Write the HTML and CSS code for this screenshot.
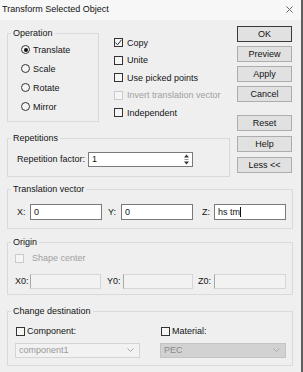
FILE: index.html
```html
<!DOCTYPE html>
<html lang="en">
<head>
    <meta charset="UTF-8">
    <meta name="viewport" content="width=device-width, initial-scale=1.0">
    <title>Transform Selected Object</title>
    <link rel="stylesheet" href="styles.css">
</head>
<body>
    <div class="window">
        <div class="titlebar">
            <span class="title">Transform Selected Object</span>
            <svg class="close" width="7" height="7" viewBox="0 0 7 7"><path d="M0.5 0.5L6.5 6.5M6.5 0.5L0.5 6.5" stroke="#666" stroke-width="1" fill="none"/></svg>
        </div>

        <div class="content">
            <div class="top">
                <div class="left">
                    <div class="row">
                        <div class="group op">
                            <span class="caption">Operation</span>
                            <div class="radio"><span class="dot on"></span>Translate</div>
                            <div class="radio"><span class="dot"></span>Scale</div>
                            <div class="radio"><span class="dot"></span>Rotate</div>
                            <div class="radio"><span class="dot"></span>Mirror</div>
                        </div>
                        <div class="options">
                            <div class="opt">
                                <span class="box">
                                    <svg width="7" height="7" viewBox="0 0 7 7"><path d="M0.5 3.5L2.5 5.8L6.5 0.8" stroke="#333" stroke-width="1" fill="none"/></svg>
                                </span>Copy
                            </div>
                            <div class="opt"><span class="box"></span>Unite</div>
                            <div class="opt"><span class="box"></span>Use picked points</div>
                            <div class="opt disabled"><span class="box"></span>Invert translation vector</div>
                            <div class="opt"><span class="box"></span>Independent</div>
                        </div>
                    </div>

                    <div class="group rep">
                        <span class="caption">Repetitions</span>
                        <div class="rep-row">
                            <span class="rep-label">Repetition factor:</span>
                            <div class="spin">
                                <span class="spin-val">1</span>
                                <svg class="spin-btn" width="9" height="13" viewBox="0 0 9 13">
                                    <path d="M4.5 1.5L7 4.5H2z" fill="#333"/>
                                    <path d="M2.5 6.5H6.5" stroke="#999" stroke-width="1"/>
                                    <path d="M4.5 11.5L7 8.5H2z" fill="#333"/>
                                </svg>
                            </div>
                        </div>
                    </div>
                </div>

                <div class="buttons">
                    <div class="btn-group">
                        <button class="default">OK</button>
                        <button>Preview</button>
                        <button>Apply</button>
                        <button>Cancel</button>
                    </div>
                    <div class="btn-group second">
                        <button>Reset</button>
                        <button>Help</button>
                        <button>Less &lt;&lt;</button>
                    </div>
                </div>
            </div>

            <div class="group vec">
                <span class="caption">Translation vector</span>
                <div class="xyz">
                    <span class="lbl lx">X:</span>
                    <div class="field w72">0</div>
                    <span class="lbl ly">Y:</span>
                    <div class="field w72">0</div>
                    <span class="lbl lz">Z:</span>
                    <div class="field w72">hs tm<span class="caret"></span></div>
                </div>
            </div>

            <div class="group origin">
                <span class="caption">Origin</span>
                <div class="opt disabled shape"><span class="box"></span>Shape center</div>
                <div class="xyz off">
                    <span class="lbl l0x">X0:</span>
                    <div class="field dis w71"></div>
                    <span class="lbl l0y">Y0:</span>
                    <div class="field dis w70"></div>
                    <span class="lbl l0z">Z0:</span>
                    <div class="field dis w72"></div>
                </div>
            </div>

            <div class="group dest">
                <span class="caption">Change destination</span>
                <div class="dest-col comp">
                    <div class="opt"><span class="box"></span>Component:</div>
                    <div class="combo light">
                        <span>component1</span>
                        <svg width="7" height="4" viewBox="0 0 7 4"><path d="M0.5 0.5L3.5 3.5L6.5 0.5" stroke="#aaa" fill="none"/></svg>
                    </div>
                </div>
                <div class="dest-col mat">
                    <div class="opt"><span class="box"></span>Material:</div>
                    <div class="combo dark">
                        <span>PEC</span>
                        <svg width="7" height="4" viewBox="0 0 7 4"><path d="M0.5 0.5L3.5 3.5L6.5 0.5" stroke="#aaa" fill="none"/></svg>
                    </div>
                </div>
            </div>
        </div>
    </div>
</body>
</html>
```

FILE: styles.css
```css
* {
    box-sizing: border-box;
}

body {
    margin: 0;
    background: #f0f0f0;
    font-family: "Liberation Sans", Arial, sans-serif;
    font-size: 9px;
    color: #141414;
}

.window {
    width: 303px;
    height: 372px;
    border-right: 2px solid #5e5e5e;
    background: #efefef;
    overflow: hidden;
}

.titlebar {
    height: 20px;
    display: flex;
    align-items: center;
    justify-content: space-between;
    padding: 0 8px 2px 2px;
    background: #f7f7f7;
}

.title {
    font-size: 9px;
    color: #111;
}

.content {
    padding: 0 8px 0 7px;
}

.top {
    display: flex;
}

.left {
    width: 223px;
}

.row {
    display: flex;
}

/* group boxes: caption sits over the top border */
.group {
    position: relative;
    border: 1px solid #dadada;
}

.caption {
    position: absolute;
    top: -6px;
    left: 3px;
    padding: 0 2px;
    line-height: 11px;
    background: #efefef;
}

.op {
    width: 92px;
    margin-top: 13px;
    padding: 6px 0 3px 13px;
}

.radio {
    height: 19px;
    display: flex;
    align-items: center;
}

.dot {
    width: 9px;
    height: 9px;
    margin-right: 3px;
    border: 1px solid #333;
    border-radius: 50%;
    background: #f5f5f5;
    display: flex;
    align-items: center;
    justify-content: center;
}

.dot.on::after {
    content: "";
    width: 4px;
    height: 4px;
    border-radius: 50%;
    background: #111;
}

.options {
    margin: 14px 0 0 15px;
}

.opt {
    height: 17.5px;
    display: flex;
    align-items: center;
}

.box {
    width: 9px;
    height: 9px;
    margin-right: 4px;
    border: 1px solid #333;
    background: #f5f5f5;
    display: flex;
    align-items: center;
    justify-content: center;
}

.opt.disabled {
    color: #a0a0a0;
}

.opt.disabled .box {
    border-color: #cacaca;
}

.rep {
    width: 223px;
    margin-top: 16px;
    padding: 13px 0 9px 9px;
}

.rep-row {
    display: flex;
    align-items: center;
}

.rep-label {
    width: 71px;
}

.spin {
    width: 105px;
    height: 15px;
    border: 1px solid #7a7a7a;
    background: #fff;
    display: flex;
    align-items: center;
    justify-content: space-between;
    padding: 0 1px 0 3px;
}

/* buttons */
.buttons {
    width: 55px;
    margin-left: 7px;
    padding-top: 6px;
}

.btn-group {
    display: flex;
    flex-direction: column;
    gap: 4px;
}

.btn-group.second {
    margin-top: 13px;
    gap: 5px;
}

button {
    height: 16px;
    padding: 0;
    border: 1px solid #adadad;
    background: #e1e1e1;
    font-family: "Liberation Sans", Arial, sans-serif;
    font-size: 9px;
    color: #141414;
}

button.default {
    border-color: #3a3a3a;
}

/* coordinate rows */
.vec {
    margin-top: 12px;
    padding: 14px 0 8px 9px;
}

.xyz {
    display: flex;
    align-items: center;
}

.lbl {
    flex: none;
}

.lx { width: 13px; }
.ly { width: 13px; margin-left: 6px; }
.lz { width: 12px; margin-left: 9px; }

.field {
    height: 16px;
    border: 1px solid #7a7a7a;
    background: #fff;
    padding-left: 3px;
    display: flex;
    align-items: center;
}

.w70 { width: 70px; }
.w71 { width: 71px; }
.w72 { width: 72px; }

.caret {
    width: 1px;
    height: 10px;
    background: #111;
}

.origin {
    margin-top: 13px;
    padding: 9px 0 5px 7px;
}

.shape {
    height: 13px;
}

.shape .box {
    margin-right: 8px;
}

.xyz.off {
    margin-top: 9px;
}

.field.dis {
    height: 15px;
    border-color: #d6d6d6;
    border-left-color: #a9a9a9;
    background: #f2f2f2;
}

.l0x { width: 15px; }
.l0y { width: 16px; margin-left: 6px; }
.l0z { width: 16px; margin-left: 5px; }

.dest {
    margin-top: 16px;
    display: flex;
    padding: 13px 0 7px 7px;
}

.dest-col .opt {
    height: 13px;
    margin-left: 1px;
}

.dest-col .box {
    margin-right: 2px;
}

.comp {
    width: 125px;
}

.mat {
    width: 126px;
    margin-left: 20px;
}

.combo {
    height: 15px;
    margin-top: 5px;
    display: flex;
    align-items: center;
    justify-content: space-between;
    padding: 0 5px 0 3px;
    color: #999;
}

.combo.light {
    border: 1px solid #d4d4d4;
    background: #f2f2f2;
}

.combo.dark {
    border: 1px solid #c4c4c4;
    background: #d2d2d2;
    color: #8a8a8a;
}
```
